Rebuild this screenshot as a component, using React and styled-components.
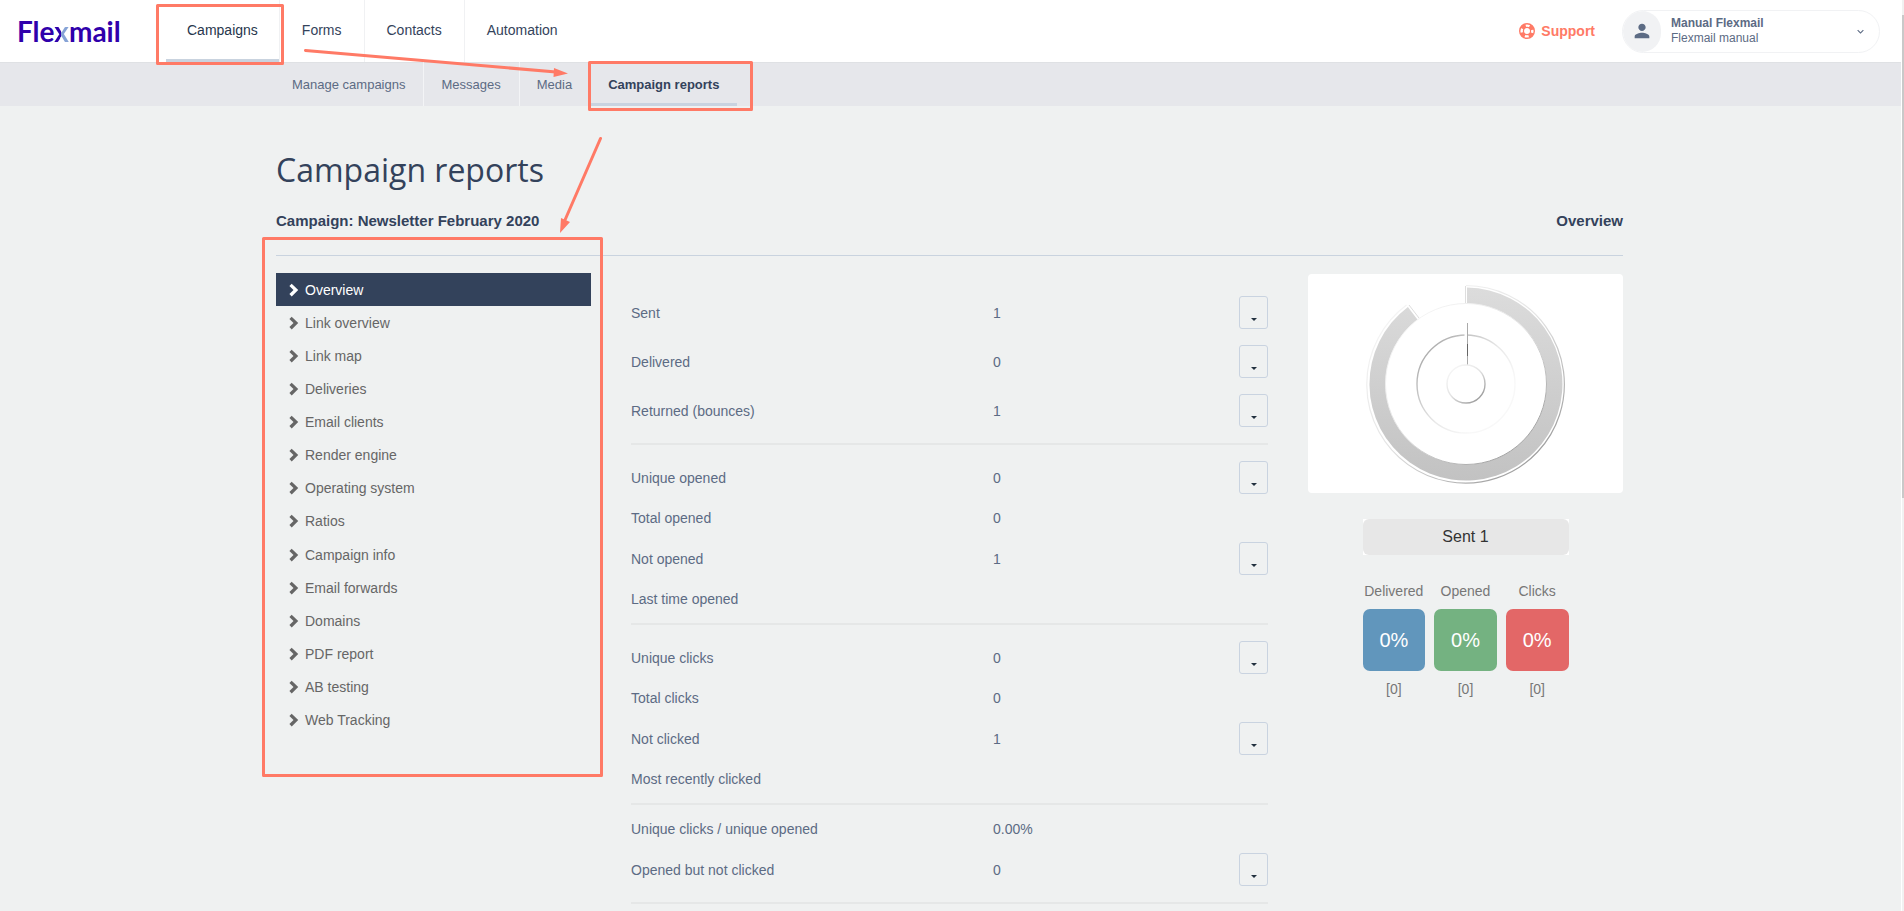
import React from 'react';
import styled, { createGlobalStyle } from 'styled-components';
import { MdPerson, MdExpandMore } from 'react-icons/md';

const GlobalStyle = createGlobalStyle`
  * {
    box-sizing: border-box;
  }
  body {
    margin: 0;
    background: #eff1f1;
    color: #5c6b84;
    font-family: "Liberation Sans", Arial, sans-serif;
    font-size: 14px;
    line-height: 20px;
  }
  a {
    color: inherit;
    text-decoration: none;
  }
  ul {
    margin: 0;
    padding: 0;
    list-style: none;
  }
`;

const Shell = styled.div`
  position: relative;
  display: flex;
  min-height: 100vh;
`;

const Page = styled.div`
  flex: 1;
  min-width: 0;
`;

const ScrollTrack = styled.div`
  width: 3px;
  padding-top: 15px;
  border-left: 1px solid #fff;
  background: #f1f1f1;
`;

const ScrollThumb = styled.div`
  height: 53vh;
  background: #c9c9c9;
`;

const Header = styled.header`
  display: flex;
  align-items: center;
  height: 62px;
  padding: 0 21px 0 17px;
  background: #fff;
`;

const Logo = styled.a`
  width: 149px;
  font-family: Lato, sans-serif;
  font-size: 28px;
  font-weight: 700;
  line-height: 36px;
  color: #2f00ab;
`;

const LogoX = styled.span`
  background: linear-gradient(100deg, #2f00ab 50%, #86a3d6 50%);
  background-clip: text;
  color: transparent;
`;

const MainNav = styled.nav`
  display: flex;
  flex: 1;
  align-self: stretch;
`;

const MainLink = styled.a`
  padding: 20px 22px 0;
  border-right: 1px solid ${props => (props.$last ? 'transparent' : '#f0f1f3')};
  color: ${props => (props.$active ? '#27364c' : '#34435b')};
  box-shadow: ${props => (props.$active ? 'inset 0 -3px #c9d3df' : 'none')};
  &:first-child {
    padding: 20px 21px 0;
  }
`;

const Support = styled.a`
  display: flex;
  align-items: center;
  gap: 6px;
  margin-right: 27px;
  color: #ff7a66;
  font-weight: 700;
`;

const Account = styled.button`
  display: flex;
  align-items: center;
  width: 258px;
  height: 43px;
  padding: 0 12px 0 0;
  border: 1px solid #f1f2f4;
  border-radius: 22px;
  background: #fff;
  color: #5c6b84;
  font-family: inherit;
  font-size: 12px;
  line-height: 15px;
  text-align: left;
  overflow: hidden;
`;

const Avatar = styled.span`
  display: flex;
  align-items: center;
  justify-content: center;
  width: 38px;
  height: 41px;
  border-radius: 20px;
  background: #f1f2f4;
`;

const AccountName = styled.span`
  flex: 1;
  margin-left: 10px;
`;

const SubNav = styled.nav`
  display: flex;
  height: 44px;
  padding-left: 275px;
  background: #e6e7eb;
  box-shadow: inset 0 1px #dfe1e4;
`;

const SubLink = styled.a`
  padding: 13px 18px 0 17px;
  border-right: 1px solid ${props => (props.$active ? 'transparent' : '#f3f4f6')};
  color: ${props => (props.$active ? '#33425b' : '#5c6b84')};
  font-size: 13px;
  font-weight: ${props => (props.$active ? 700 : 400)};
  box-shadow: ${props => (props.$active ? 'inset 0 -3px #c9d3e0' : 'none')};
`;

const Container = styled.main`
  max-width: 1349px;
  margin: 0 auto;
  padding: 44px 2px 0 0;
`;

const Title = styled.h1`
  margin: 0;
  color: #33425b;
  font-family: "Open Sans", sans-serif;
  font-size: 32px;
  font-weight: 400;
  line-height: 40px;
`;

const TitleBar = styled.div`
  display: flex;
  justify-content: space-between;
  padding: 21px 0 24px;
  border-bottom: 1px solid #c9d3df;
  color: #33425b;
`;

const SubTitle = styled.h2`
  margin: 0;
  font-size: 15px;
  line-height: 20px;
`;

const Columns = styled.div`
  display: grid;
  grid-template-columns: 315fr 637fr 315fr;
  gap: 40px;
  align-items: start;
  padding-top: 17px;
`;

const ReportList = styled.ul`
  display: grid;
  grid-auto-rows: 1fr;
  height: 464px;
`;

const ReportLink = styled.a`
  display: flex;
  align-items: center;
  gap: 6px;
  height: 33px;
  padding-left: 13px;
  background: ${props => (props.$active ? '#33425b' : 'transparent')};
  color: ${props => (props.$active ? '#fff' : '#666')};
`;

const Stats = styled.table`
  width: 100%;
  margin-top: 7px;
  border-spacing: 0;
  table-layout: fixed;
  th, td {
    padding: 0;
    font-weight: 400;
    text-align: left;
  }
  tr:first-child > * {
    padding-top: 8px;
  }
  tr:last-child > * {
    padding-bottom: 8px;
    border-bottom: 2px solid #e5e7e7;
  }
`;

const LabelCol = styled.col`
  width: 362px;
`;

const ActionCol = styled.col`
  width: 29px;
`;

const RowLabel = styled.div`
  display: flex;
  align-items: center;
  height: ${props => (props.$tall ? '49px' : '32px')};
`;

const MoreButton = styled.button`
  display: flex;
  align-items: flex-end;
  justify-content: center;
  width: 29px;
  height: 33px;
  padding: 0 0 7px;
  border: 1px solid #c9d3e0;
  border-radius: 3px;
  background: transparent;
`;

const Caret = styled.span`
  border: 3px solid transparent;
  border-top-color: #22303f;
  border-bottom: 0;
`;

const Card = styled.div`
  display: flex;
  justify-content: center;
  margin-top: 1px;
  border-radius: 4px;
  background: #fff;
`;

const Totals = styled.section`
  width: 206px;
  margin: 26px auto 0;
  color: #777;
  text-align: center;
`;

const SentBackdrop = styled.div`
  background: #fff;
`;

const SentTotal = styled.div`
  border-radius: 6px;
  background: #e7e7e7;
  color: #333;
  font-size: 16px;
  line-height: 36px;
`;

const Rates = styled.div`
  display: grid;
  grid-template-columns: repeat(3, 1fr);
  gap: 9px;
  padding-top: 26px;
`;

const Rate = styled.div`
  display: flex;
  flex-direction: column;
  gap: 8px;
`;

const RateBox = styled.div`
  border-radius: 7px;
  background: ${props => props.$color};
  color: #fff;
  font-size: 20px;
  line-height: 62px;
`;

const Marks = styled.svg`
  position: absolute;
  top: 0;
  left: 0;
  pointer-events: none;
`;

const reports = [
  'Overview',
  'Link overview',
  'Link map',
  'Deliveries',
  'Email clients',
  'Render engine',
  'Operating system',
  'Ratios',
  'Campaign info',
  'Email forwards',
  'Domains',
  'PDF report',
  'AB testing',
  'Web Tracking',
];

// [label, value, has a details button]
const stats = [
  [
    ['Sent', '1', true],
    ['Delivered', '0', true],
    ['Returned (bounces)', '1', true],
  ],
  [
    ['Unique opened', '0', true],
    ['Total opened', '0', false],
    ['Not opened', '1', true],
    ['Last time opened', '', false],
  ],
  [
    ['Unique clicks', '0', true],
    ['Total clicks', '0', false],
    ['Not clicked', '1', true],
    ['Most recently clicked', '', false],
  ],
  [
    ['Unique clicks / unique opened', '0.00%', false],
    ['Opened but not clicked', '0', true],
  ],
];

const rates = [
  { label: 'Delivered', color: '#6196bc' },
  { label: 'Opened', color: '#74b281' },
  { label: 'Clicks', color: '#e36767' },
];

const Chevron = () => (
  <svg width="10" height="14" viewBox="0 0 10 14" fill="currentColor" aria-hidden="true">
    <path d="M0.400 3.100L2.700 0.800L9.200 7L2.700 13.400L0.400 11.100L4.500 7Z" />
  </svg>
);

const LifeRing = () => (
  <svg width="16" height="16" viewBox="-8 -8 16 16" fill="none" stroke="currentColor" aria-hidden="true">
    <circle r="7.3" strokeWidth="1.4" />
    <circle r="3.6" strokeWidth="1.2" />
    <circle r="5.4" strokeWidth="4" strokeDasharray="4.6 3.882" strokeDashoffset="-1.94" />
  </svg>
);

const Gauge = () => (
  <svg width="206" height="219" viewBox="-103 -110 206 219" aria-hidden="true">
    <defs>
      <linearGradient id="ring" x1="0" y1="0" x2="0" y2="1">
        <stop offset="0" stopColor="#dcdcdc" />
        <stop offset="1" stopColor="#c2c2c2" />
      </linearGradient>
      <linearGradient id="lowerRight" x1="0.1" y1="0.1" x2="0.8" y2="0.9">
        <stop offset="0" stopColor="#f6f6f6" />
        <stop offset="0.5" stopColor="#e4e4e4" />
        <stop offset="1" stopColor="#a0a0a0" />
      </linearGradient>
      <linearGradient id="upperLeft" x1="0.1" y1="0.2" x2="0.75" y2="0.75">
        <stop offset="0" stopColor="#b0b0b0" />
        <stop offset="0.6" stopColor="#e8e8e8" />
        <stop offset="1" stopColor="#f8f8f8" />
      </linearGradient>
    </defs>
    <path d="M0-98.5A98.8 98.8 0 1 1-59.5-78.9" fill="none" stroke="url(#lowerRight)" strokeWidth="1.2" />
    <path d="M1-96.500A96.500 96.500 0 1 1-58.1-77.1L-48.4-64.2A80.5 80.5 0 1 0 1-80.5Z" fill="url(#ring)" />
    <path d="M-57-79L-47-66M-0.500-98V-81" stroke="#dedede" />
    <circle r="80.5" fill="#fff" stroke="url(#lowerRight)" />
    <circle r="49" fill="none" stroke="url(#upperLeft)" strokeWidth="1.4" />
    <path d="M0-61V-19" stroke="#fff" strokeWidth="3" />
    <path d="M1.500-61V-19" stroke="#aaa" />
    <path d="M1.500-40V-28" stroke="#666" />
    <circle r="19" fill="#fff" stroke="url(#lowerRight)" strokeWidth="1.4" />
  </svg>
);

const App = () => (
  <Shell>
    <GlobalStyle />
    <Page>
      <Header>
        <Logo href="#">Fle<LogoX>x</LogoX>mail</Logo>
        <MainNav>
          <MainLink href="#" $active>Campaigns</MainLink>
          <MainLink href="#">Forms</MainLink>
          <MainLink href="#">Contacts</MainLink>
          <MainLink href="#" $last>Automation</MainLink>
        </MainNav>
        <Support href="#">
          <LifeRing />
          Support
        </Support>
        <Account type="button">
          <Avatar><MdPerson size={22} /></Avatar>
          <AccountName>
            <strong>Manual Flexmail</strong><br />
            Flexmail manual
          </AccountName>
          <MdExpandMore size={13} />
        </Account>
      </Header>
      <SubNav>
        <SubLink href="#">Manage campaigns</SubLink>
        <SubLink href="#">Messages</SubLink>
        <SubLink href="#">Media</SubLink>
        <SubLink href="#" $active>Campaign reports</SubLink>
      </SubNav>
      <Container>
        <Title>Campaign reports</Title>
        <TitleBar>
          <SubTitle>Campaign: Newsletter February 2020</SubTitle>
          <SubTitle>Overview</SubTitle>
        </TitleBar>
        <Columns>
          <ReportList>
            {reports.map((name, i) => (
              <li key={name}>
                <ReportLink href="#" $active={i === 0}>
                  <Chevron />
                  {name}
                </ReportLink>
              </li>
            ))}
          </ReportList>
          <Stats>
            <colgroup>
              <LabelCol />
              <col />
              <ActionCol />
            </colgroup>
            {stats.map((group, i) => (
              <tbody key={i}>
                {group.map(([label, value, more]) => (
                  <tr key={label}>
                    <th scope="row"><RowLabel $tall={more}>{label}</RowLabel></th>
                    <td>{value}</td>
                    <td>
                      {more && (
                        <MoreButton type="button" aria-label={`${label} details`}>
                          <Caret />
                        </MoreButton>
                      )}
                    </td>
                  </tr>
                ))}
              </tbody>
            ))}
          </Stats>
          <div>
            <Card><Gauge /></Card>
            <Totals>
              <SentBackdrop>
                <SentTotal>Sent 1</SentTotal>
              </SentBackdrop>
              <Rates>
                {rates.map(({ label, color }) => (
                  <Rate key={label}>
                    <span>{label}</span>
                    <RateBox $color={color}>0%</RateBox>
                    <span>[0]</span>
                  </Rate>
                ))}
              </Rates>
            </Totals>
          </div>
        </Columns>
      </Container>
    </Page>
    <ScrollTrack>
      <ScrollThumb />
    </ScrollTrack>
    <Marks width="760" height="780" fill="none" stroke="#ff7a66" strokeWidth="3" strokeLinejoin="round" strokeLinecap="round" aria-hidden="true">
      <rect x="157.5" y="5.5" width="125" height="58" />
      <rect x="589.5" y="62.5" width="162" height="47" />
      <rect x="263.5" y="238.5" width="338" height="537" />
      <path d="M305.500 50.500L556 72M600.500 138.500L565 220" />
      <path d="M554 68L568 73.500L553.500 77ZM561 218L570 222L560 233Z" fill="#ff7a66" strokeWidth="0" />
    </Marks>
  </Shell>
);

export default App;
